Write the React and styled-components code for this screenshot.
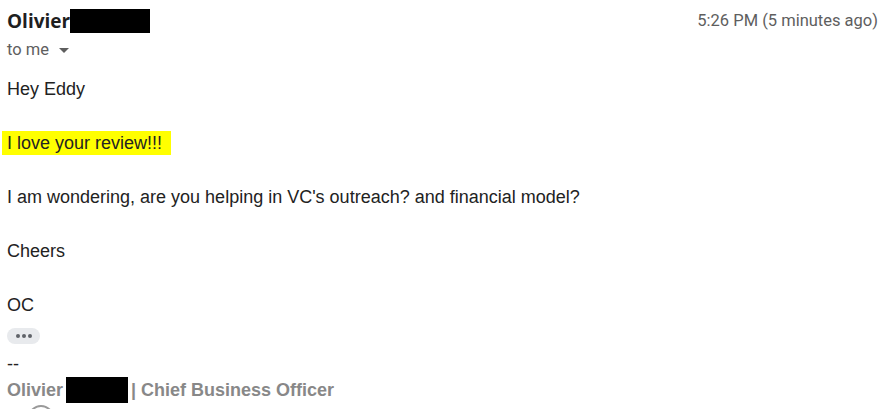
import React from 'react'
import styled, { createGlobalStyle } from 'styled-components'

const GlobalStyle = createGlobalStyle`
  html, body {
    margin: 0;
    padding: 0;
    background: #ffffff;
  }
`;

const Mail = styled.div`
  width: 888px;
  height: 409px;
  overflow: hidden;
  padding: 0 10px 0 7px;
  box-sizing: border-box;
  font-family: Arial, "Liberation Sans", sans-serif;
  color: #222222;
`;

const Header = styled.div`
  display: flex;
  justify-content: space-between;
  align-items: flex-start;
  padding-top: 8px;
`;

const Sender = styled.div`
  display: flex;
  align-items: center;
  font-family: "Open Sans", Roboto, sans-serif;
  font-weight: 700;
  font-size: 19px;
  color: #1f1f1f;
  height: 26px;
`;

const Redacted = styled.span`
  display: inline-block;
  width: ${p => p.w}px;
  height: ${p => p.h}px;
  background: #000;
`;

const Time = styled.div`
  font-family: Roboto, "Liberation Sans", sans-serif;
  font-size: 16.5px;
  color: #5e5e5e;
  padding-top: 3px;
`;

const Recipient = styled.div`
  display: flex;
  align-items: center;
  gap: 10px;
  font-family: Roboto, "Liberation Sans", sans-serif;
  font-size: 16.5px;
  color: #5e5e5e;
  margin-top: 6px;
`;

const Caret = styled.span`
  width: 0;
  height: 0;
  border-left: 5px solid transparent;
  border-right: 5px solid transparent;
  border-top: 5px solid #5e5e5e;
  margin-top: 2px;
`;

const Body = styled.div`
  margin-top: 17px;
  font-size: 18px;
  line-height: 27px;
`;

const Line = styled.div`
  min-height: 27px;
`;

const Highlight = styled.span`
  background: #ffff00;
  margin-left: -5px;
  padding: 0 9px 0 5px;
  display: inline-block;
  line-height: 24px;
`;

const MoreButton = styled.div`
  width: 33px;
  height: 16px;
  border-radius: 8px;
  background: #e8eaed;
  display: flex;
  align-items: center;
  justify-content: center;
  gap: 2px;
  margin-top: 9px;
`;

const Dot = styled.span`
  width: 4px;
  height: 4px;
  border-radius: 50%;
  background: #5f6368;
`;

const Signature = styled.div`
  margin-top: 10px;
  font-size: 18px;
  color: #222;
`;

const SigName = styled.div`
  display: flex;
  align-items: center;
  gap: 3px;
  font-weight: 700;
  color: #888888;
  margin-top: 2px;
`;

const Avatar = styled.div`
  width: 22px;
  height: 22px;
  border-radius: 50%;
  border: 2px solid #9a9a9a;
  margin: 2px 0 0 21px;
`;

export default function App() {
  return (
    <Mail>
      <GlobalStyle />
      <Header>
        <Sender>
          Olivier<Redacted w={80} h={24} />
        </Sender>
        <Time>5:26 PM (5 minutes ago)</Time>
      </Header>
      <Recipient>
        to me <Caret />
      </Recipient>
      <Body>
        <Line>Hey Eddy</Line>
        <Line />
        <Line><Highlight>I love your review!!!</Highlight></Line>
        <Line />
        <Line>I am wondering, are you helping in VC's outreach? and financial model?</Line>
        <Line />
        <Line>Cheers</Line>
        <Line />
        <Line>OC</Line>
      </Body>
      <MoreButton>
        <Dot /><Dot /><Dot />
      </MoreButton>
      <Signature>
        <div>--</div>
        <SigName>
          Olivier <Redacted w={62} h={26} /> | Chief Business Officer
        </SigName>
        <Avatar />
      </Signature>
    </Mail>
  )
}
